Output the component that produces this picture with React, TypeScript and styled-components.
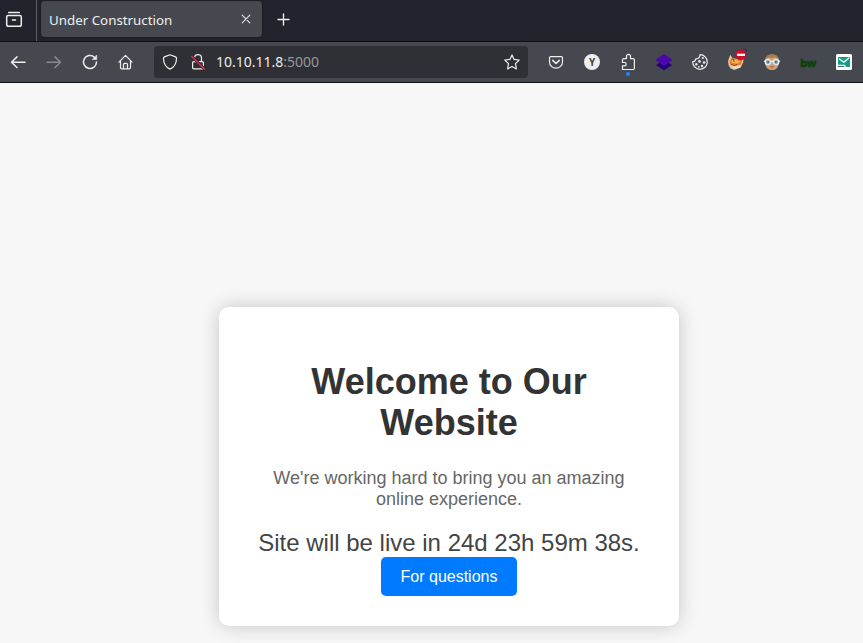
import React from "react";
import styled, { createGlobalStyle } from "styled-components";

const GlobalStyle = createGlobalStyle`
  *, *::before, *::after { box-sizing: border-box; }
  body { margin: 0; overflow: hidden; }
`;

const Window = styled.div`
  display: flex;
  flex-direction: column;
  width: 863px;
  height: 643px;
  font-family: "Noto Sans", sans-serif;
  background: #f7f7f7;
`;

const TabStrip = styled.header`
  display: flex;
  align-items: flex-start;
  height: 42px;
  background: #22242d;
  border-bottom: 1px solid #0e0f14;
`;

const FirefoxView = styled.button`
  width: 37px;
  height: 41px;
  padding: 0;
  border: 0;
  border-right: 1px solid #5b5d64;
  background: none;
`;

const Tab = styled.div`
  display: flex;
  align-items: center;
  justify-content: space-between;
  width: 221px;
  height: 36px;
  margin: 1px 0 0 4px;
  padding: 0 8px;
  border-radius: 4px;
  background: #464850;
  box-shadow: 0 0 3px rgba(0, 0, 0, 0.45);
  color: #eeeeec;
  font-size: 13.33px;
  line-height: 18px;
`;

const TabTitle = styled.span`
  padding-top: 2px;
`;

const NewTab = styled.button`
  width: 43px;
  height: 39px;
  padding: 0;
  border: 0;
  background: none;
`;

const Toolbar = styled.nav`
  display: flex;
  align-items: center;
  height: 41px;
  background: #464850;
  border-bottom: 1px solid #0e0f14;
`;

const ToolButton = styled.button<{ $dim?: boolean }>`
  flex: none;
  width: 36px;
  height: 40px;
  padding: 0;
  border: 0;
  background: none;
  opacity: ${(p) => (p.$dim ? 0.4 : 1)};
`;

const UrlBar = styled.div`
  display: flex;
  align-items: center;
  width: 374px;
  height: 32px;
  margin: 0 10px;
  padding: 0 2px;
  border-radius: 4px;
  background: #2f3035;
`;

const UrlIcon = styled.span`
  flex: none;
  width: 28px;
  height: 28px;
`;

const Address = styled.span`
  flex: 1;
  padding-left: 4px;
  color: #eeeeec;
  font-size: 14px;
  line-height: 20px;
`;

const Port = styled.span`
  color: #95969a;
`;

const Glyph = styled.svg`
  display: block;
  width: 100%;
  height: 100%;
  fill: none;
  stroke: #eeeeec;
  stroke-width: 1.2;
  stroke-linecap: round;
  stroke-linejoin: round;
`;

const BadgeText = styled.text`
  fill: #42444b;
  stroke: none;
  font: bold 10px "Noto Sans", sans-serif;
  text-anchor: middle;
`;

const BwText = styled.text`
  fill: #0c400c;
  stroke: #0c400c;
  stroke-width: 0.7;
  font: bold 11px "Noto Sans", sans-serif;
  letter-spacing: -0.3px;
  text-anchor: middle;
`;

const Page = styled.main`
  display: flex;
  justify-content: center;
  align-items: flex-start;
  flex: 1;
  padding: 224px 0 0 35px;
  overflow: hidden;
  font-family: "Liberation Sans", Arial, sans-serif;
`;

const Card = styled.section`
  width: 460px;
  height: 319px;
  padding: 30px;
  border-radius: 10px;
  background: #fff;
  box-shadow: 0 0 20px rgba(0, 0, 0, 0.2);
  text-align: center;
`;

const Heading = styled.h1`
  margin: 24px 0 25px;
  color: #333;
  font-size: 36px;
  line-height: 41px;
`;

const Lead = styled.p`
  margin: 0 0 19px;
  color: #666;
  font-size: 18px;
  line-height: 21px;
`;

const Countdown = styled.div`
  margin: 0 -10px;
  color: #444;
  font-size: 24px;
  line-height: 28px;
  white-space: nowrap;
`;

const Questions = styled.button`
  display: block;
  width: 136px;
  height: 39px;
  margin: 0 auto;
  padding: 0;
  border: 0;
  border-radius: 5px;
  background: #007bff;
  color: #fff;
  font: 16px "Liberation Sans", Arial, sans-serif;
`;

type IconProps = { box?: string; children: React.ReactNode };

const Icon = ({ box = "-18 -20 36 40", children }: IconProps) => (
  <Glyph viewBox={box} aria-hidden="true">{children}</Glyph>
);

const ArrowLeft = () => <Icon><path d="M7 .2H-6.5M-1-5.1-6.5.2-1 5.5" strokeWidth="1.5" /></Icon>;
const ArrowRight = () => <Icon><path d="M-7 .2H6.5M1-5.1 6.5.2 1 5.5" strokeWidth="1.5" /></Icon>;
const Reload = () => (
  <Icon>
    <path d="M4.3-4.9A6.5 6.5 0 1 0 6.5 0" strokeWidth="1.5" />
    <path d="M6.7-6.6V-2.5H2.6Z" fill="#eeeeec" strokeWidth=".6" />
  </Icon>
);
const Home = () => (
  <Icon>
    <path d="M-7 .1-.5-6.6 6 .1M-5.5-1.2V5.5Q-5.5 6.8-4.2 6.8H3.2Q4.5 6.8 4.5 5.5V-1.2M-2.5 6.5V2.4Q-2.5 1.4-1.5 1.4H.5Q1.5 1.4 1.5 2.4V6.5" />
  </Icon>
);
const Shield = () => (
  <Icon box="-14 -14 28 28">
    <path d="M0-7.2 5.6-5.1Q6.5-4.7 6.5-3.8C6.5 1.8 4.2 5.1 0 7.1-4.2 5.1-6.5 1.8-6.5-3.8Q-6.5-4.7-5.6-5.1Z" />
  </Icon>
);
const InsecureLock = () => (
  <Icon box="-14 -14 28 28">
    <path d="M-3.5-4.2A3.5 3.5 0 0 1 3.5-3.6V-.5M-4.1-.4H4.3Q5.4-.4 5.4.7V5.7Q5.4 6.9 4.3 6.9H-4.3Q-5.4 6.9-5.4 5.7V.7Q-5.4-.4-4.1-.4Z" />
    <path d="M-6.3-5.8 6.8 7.3" stroke="#2f3035" strokeWidth="3" />
    <path d="M-6.3-5.6 6.5 7.2" stroke="#e22850" strokeWidth="1.4" />
  </Icon>
);
const Star = () => (
  <Icon box="-14 -14 28 28">
    <path d="M0-7.1 2.1-2.6 7.2-2 3.5 1.7 4.4 6.9 0 4.4-4.4 6.9-3.5 1.7-7.2-2-2.1-2.6Z" />
  </Icon>
);
const Pocket = () => (
  <Icon>
    <path d="M-5.3-5.4H5.3Q6.5-5.4 6.5-4.2V0A6.5 6.2 0 0 1-6.5 0V-4.2Q-6.5-5.4-5.3-5.4Z" />
    <path d="M-3.3-1.6 0 1.5 3.3-1.6" strokeWidth="1.5" />
  </Icon>
);
const Account = () => (
  <Icon>
    <circle r="8" fill="#eeeeec" stroke="none" />
    <BadgeText x="0" y="3.7">Y</BadgeText>
  </Icon>
);
const Extensions = () => (
  <Icon>
    <path d="M-5.5 7.5H5.2Q6.4 7.5 6.4 6.3V-2.2Q6.4-3.4 5.2-3.4H2.5V-5.6A1.9 1.9 0 0 0-1.5-5.6V-3.4H-4.2Q-5.5-3.4-5.5-2.1V.5H-3.5A1.7 1.7 0 0 1-3.5 3.9H-5.5Z" />
    <circle cx="0" cy="12" r="2" fill="#2684ff" stroke="none" />
  </Icon>
);
const Layers = () => (
  <Icon>
    <path d="M-8 3.1 0-2 8 3.1 0 8.2Z" fill="#210078" stroke="none" />
    <path d="M0-8 8-2.6V-1.4L0 4-8-1.4V-2.6Z" fill="#4c08ac" stroke="none" />
  </Icon>
);
const Cookie = () => (
  <Icon>
    <path d="M0-7.3A7.3 7.3 0 1 1-7.3-.4C-5-.2-4.4-1.4-4.2-3.2-2-3-.3-4.5 0-7.3Z" strokeWidth="1.2" />
    <g fill="#eeeeec" stroke="none">
      <circle cx="2.8" cy="-4" r="1.1" /><circle cx="-.5" cy="-.6" r="1.3" /><circle cx="4.1" cy=".5" r="1.3" />
      <circle cx="-3.7" cy="2.2" r="1.2" /><circle cx="2" cy="4" r="1.2" /><circle cx="-1.1" cy="4.8" r=".9" />
    </g>
  </Icon>
);
const Blocker = () => (
  <Icon>
    <g stroke="none">
      <path d="M-8-1-5.8-7.2-3.5-4 3-2.5 7.5-3.8 7.3 0 4.8 5.5-1.6 8-5.2 6.7-7.4 3.5Z" fill="#e3bd96" />
      <path d="M-6.2-.6-4.6-3.7.2-2.4 6.4-2.4 4.4 3.5-1.8 4-5.7 2.3Z" fill="#e87b25" />
      <path d="M-4.9-1.3-1-2.2 4.6-.5 1.3 1.5-3.7.9Z" fill="#ffb44c" />
      <path d="M-4.7 3.3-.7 4.3 4.8 2.7 3.7 5.4-1 6.8-3.8 5.8Z" fill="#f2e1ca" />
      <path d="M-4.8 2.6-1.5 3.7.8 2.5M-3.1-3.2-1.7-.2" stroke="#704534" strokeWidth=".9" />
      <path d="M-1-12.8H11V-9.8L8.7-12Z" fill="#38363c" />
      <circle cx="4.9" cy="-7.2" r="5.4" fill="#c90d2b" />
      <rect x="1" y="-8.3" width="8" height="2.2" fill="#fff" />
    </g>
  </Icon>
);
const Face = () => (
  <Icon>
    <g stroke="none">
      <path d="M-7.1-.8C-7.1-5-4.2-7.5 0-7.5S7.1-5 7.1-.8C7.1 4.5 4.5 8 0 8S-7.1 4.5-7.1-.8Z" fill="#d3a078" />
      <path d="M-6.8-2.1C-6.3-5.7-4-7.5 0-7.5S6.3-5.7 6.8-2.1C5-4.9 2.5-5.6 0-3.9-2.5-4.5-5-4.5-6.8-2.1Z" fill="#a87850" />
      <path d="M-2.3 4.4Q0 3.6 2.3 4.4L1.2 5.7H-1.2Z" fill="#b86851" />
    </g>
    <g fill="#8ca9b2" stroke="#e0ebed" strokeWidth="1.4">
      <circle cx="-4.1" cy="0" r="2.6" /><circle cx="4.1" cy="0" r="2.6" />
      <path d="M-1.3-.5H1.3M-7-.7H-7.5M7-.7H7.5" />
    </g>
    <g fill="#3f6677" stroke="none"><circle cx="-3.9" cy="0" r="1" /><circle cx="3.9" cy="0" r="1" /></g>
  </Icon>
);
const Bw = () => <Icon><BwText x="0" y="4.6">bw</BwText></Icon>;
const Mail = () => (
  <Icon>
    <g stroke="none">
      <rect x="-8" y="-8" width="16" height="16" rx="1.6" fill="#fff" />
      <path d="M-6-5H6V5H2L1 2.8H-6Z" fill="#159c84" />
      <path d="M-6 4.5H0" stroke="#56666b" strokeWidth="1.1" />
    </g>
    <path d="M-4.6-3-.1.3 4.9-4" stroke="#fff" strokeWidth="1.3" />
  </Icon>
);

const extensions = [
  ["Pocket", Pocket], ["Account", Account], ["Extensions", Extensions], ["Layers", Layers],
  ["Cookies", Cookie], ["Blocker", Blocker], ["Face", Face], ["bw", Bw], ["Mail", Mail],
] as const;

export default function App() {
  return (
    <>
      <GlobalStyle />
      <Window>
        <TabStrip>
          <FirefoxView aria-label="View">
            <Icon box="-14 -19 36 41">
              <path d="M-5.3-6.5H5.3M-6-3.4H6Q7.3-3.4 7.3-2.1V5.4Q7.3 7.3 5.4 7.3H-5.4Q-7.3 7.3-7.3 5.4V-2.1Q-7.3-3.4-6-3.4ZM-1.5 1H1.5" strokeWidth="1.5" />
            </Icon>
          </FirefoxView>
          <Tab>
            <TabTitle>Under Construction</TabTitle>
            <svg width="16" height="16" viewBox="-8 -8 16 16" stroke="#dededd" strokeWidth="1.2" strokeLinecap="round" aria-hidden="true">
              <path d="M-3.8-3.8 3.8 3.8M3.8-3.8-3.8 3.8" />
            </svg>
          </Tab>
          <NewTab aria-label="New tab">
            <Icon box="-21.5 -19.5 43 39"><path d="M-5.5 0H5.5M0-5.5V5.5" strokeWidth="1.4" /></Icon>
          </NewTab>
        </TabStrip>
        <Toolbar>
          <ToolButton aria-label="Back"><ArrowLeft /></ToolButton>
          <ToolButton aria-label="Forward" $dim><ArrowRight /></ToolButton>
          <ToolButton aria-label="Reload"><Reload /></ToolButton>
          <ToolButton aria-label="Home"><Home /></ToolButton>
          <UrlBar>
            <UrlIcon><Shield /></UrlIcon>
            <UrlIcon><InsecureLock /></UrlIcon>
            <Address>10.10.11.8<Port>:5000</Port></Address>
            <UrlIcon><Star /></UrlIcon>
          </UrlBar>
          {extensions.map(([name, Drawing]) => (
            <ToolButton key={name} aria-label={name}><Drawing /></ToolButton>
          ))}
        </Toolbar>
        <Page>
          <Card>
            <Heading>Welcome to Our Website</Heading>
            <Lead>We're working hard to bring you an amazing online experience.</Lead>
            <Countdown>Site will be live in 24d 23h 59m 38s.</Countdown>
            <Questions>For questions</Questions>
          </Card>
        </Page>
      </Window>
    </>
  );
}
